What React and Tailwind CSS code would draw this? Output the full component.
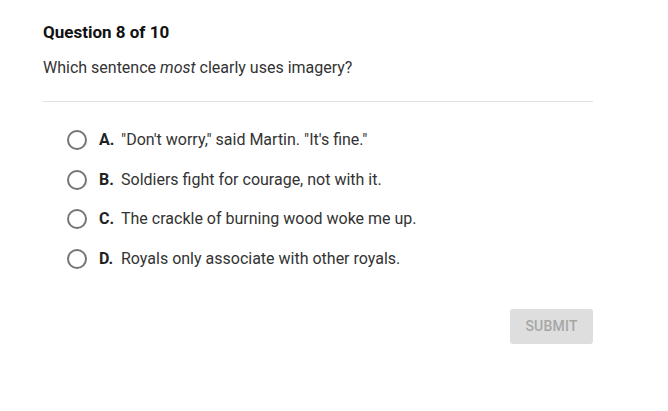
import React from 'react';

const options = [
  { letter: 'A.', text: '"Don\'t worry," said Martin. "It\'s fine."' },
  { letter: 'B.', text: 'Soldiers fight for courage, not with it.' },
  { letter: 'C.', text: 'The crackle of burning wood woke me up.' },
  { letter: 'D.', text: 'Royals only associate with other royals.' },
];

export default function App() {
  return (
    <div className="w-[668px] h-[411px] bg-white font-['Roboto',sans-serif] text-[#222]">
      <div className="w-[550px] ml-[43px] pt-[22px]">
        {/* Header */}
        <h1 className="text-[17px] font-bold leading-[20px] text-[#111]">Question 8 of 10</h1>
        <p className="mt-[16px] text-[16px] leading-[20px] text-[#333]">
          Which sentence <em>most</em> clearly uses imagery?
        </p>
        <div className="mt-[23px] h-px bg-[#e2e2e2]" />

        {/* Options */}
        <div className="mt-[28px] pl-[24px] flex flex-col gap-[19.5px]">
          {options.map((o) => (
            <label key={o.letter} className="flex items-center h-[20px] cursor-pointer">
              <span className="w-[20px] h-[20px] rounded-full border-2 border-[#757575] shrink-0" />
              <span className="ml-[12px] w-[22px] text-[16px] font-bold text-[#222]">{o.letter}</span>
              <span className="text-[16px] text-[#333]">{o.text}</span>
            </label>
          ))}
        </div>

        {/* Submit */}
        <div className="mt-[40px] flex justify-end">
          <button className="w-[83px] h-[35px] rounded-[3px] bg-[#dedede] text-[14px] font-medium text-[#a6a6a6] tracking-[0.2px]">
            SUBMIT
          </button>
        </div>
      </div>
    </div>
  );
}
